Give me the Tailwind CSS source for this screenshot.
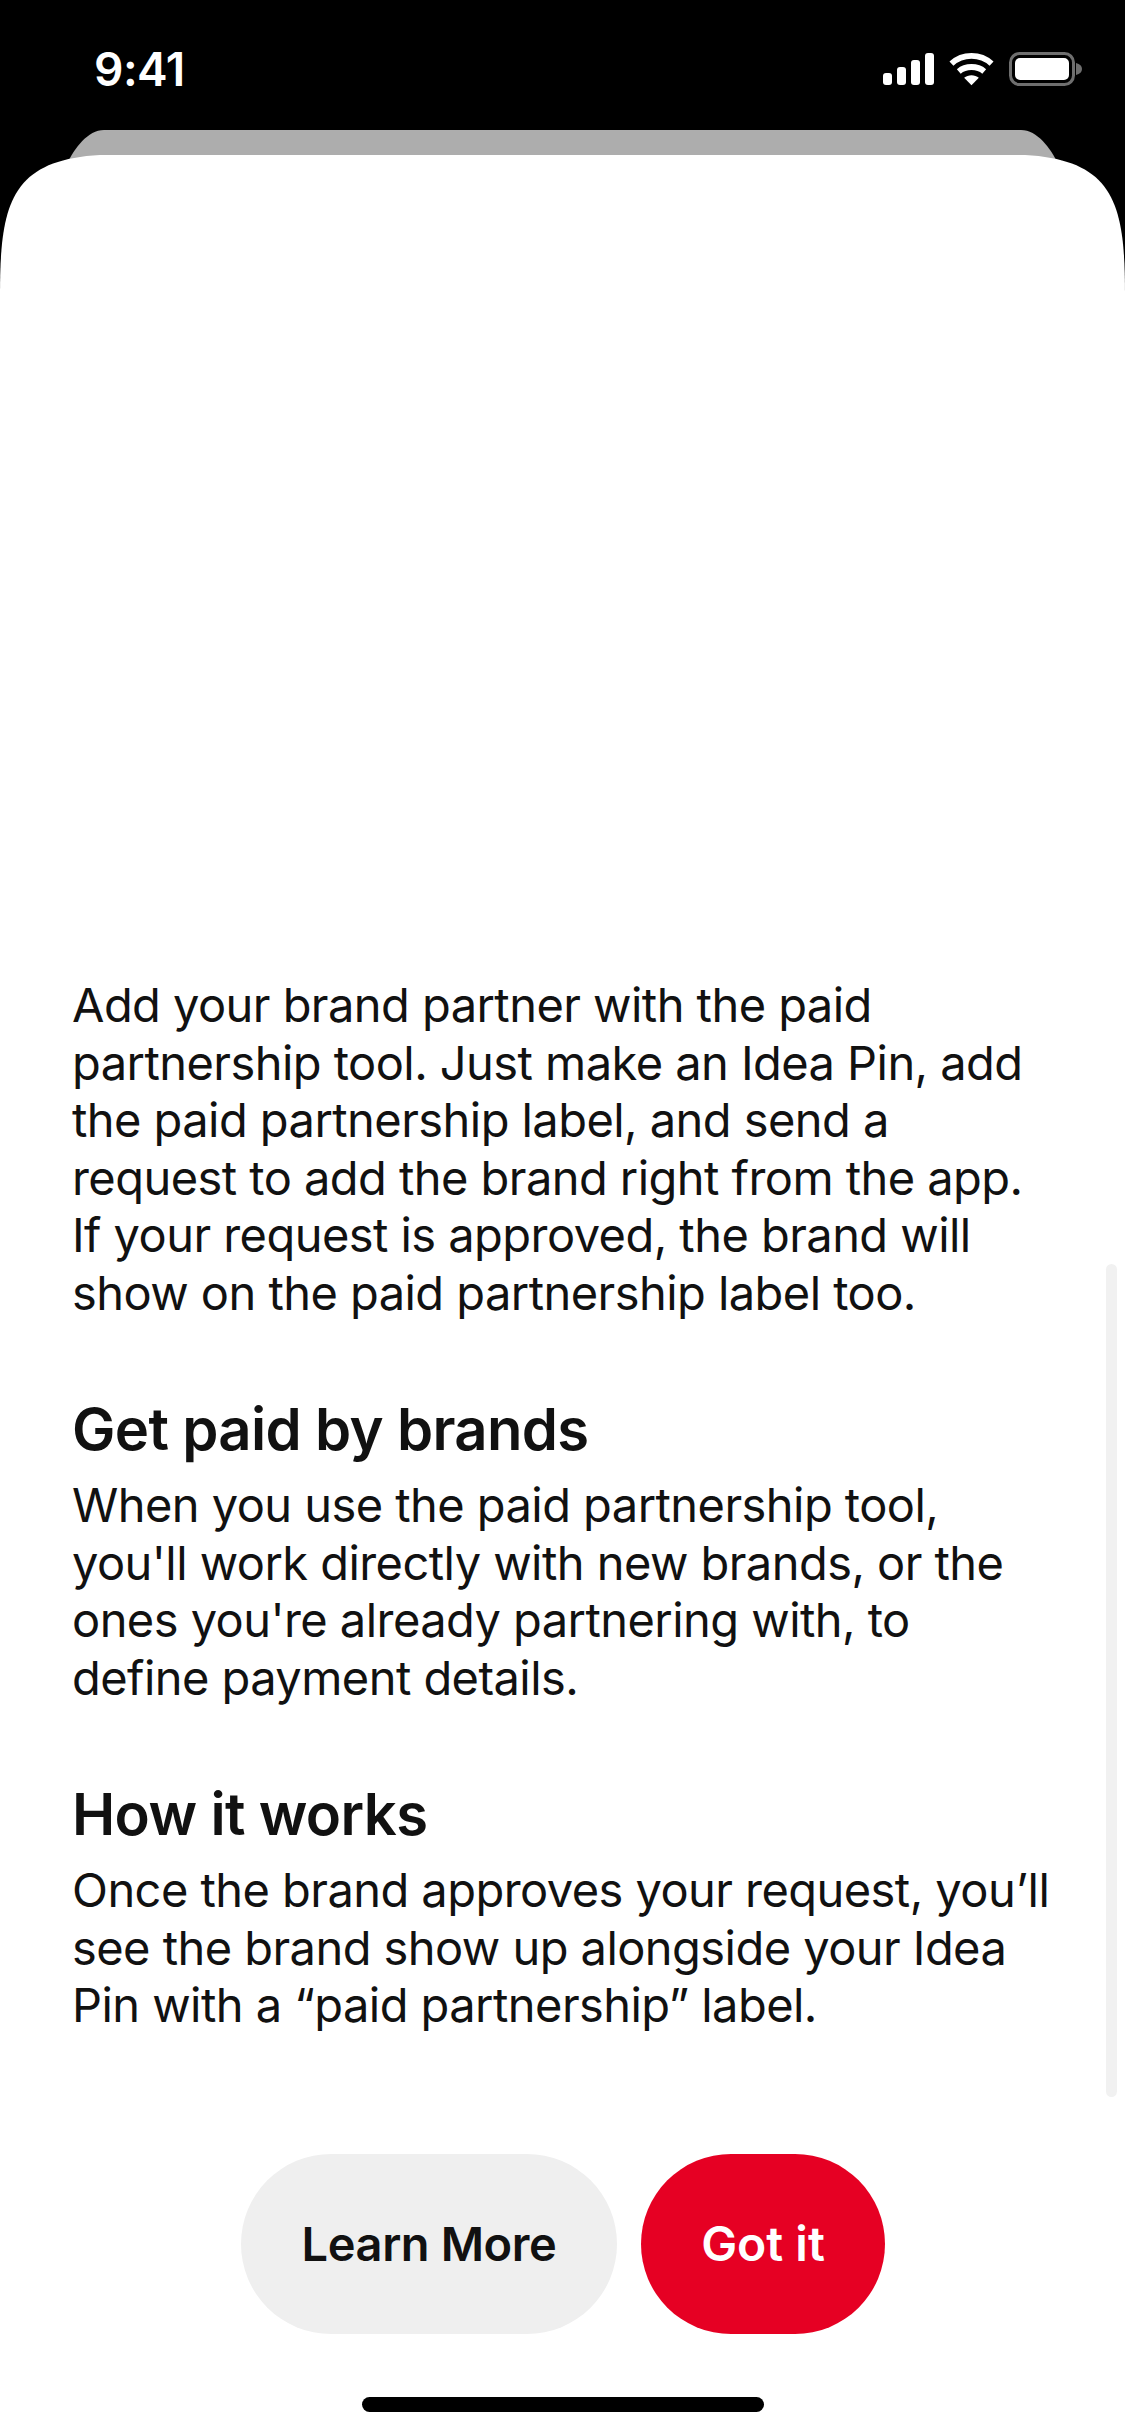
<!DOCTYPE html>
<html lang="en">
<head>
    <meta charset="UTF-8">
    <title>Paid partnership</title>
    <script src="https://cdn.jsdelivr.net/npm/@tailwindcss/browser@4"></script>
</head>
<body class="bg-black font-['Inter',sans-serif] overflow-hidden">
    <div class="w-[1125px] h-[2436px] flex flex-col">
        <!-- Status bar -->
        <div class="h-[130px] pl-[94px] pr-[43px] flex items-start justify-between text-white">
            <span class="mt-[42px] text-[46px] leading-[54px] font-semibold tracking-[-0.5px]">9:41</span>
            <div class="mt-[52px] flex items-end gap-[15px]">
                <svg width="51" height="34" viewBox="0 0 51 34" fill="#fff">
                    <rect x="0" y="21" width="9" height="12" rx="3"/>
                    <rect x="14" y="15" width="9" height="18" rx="3"/>
                    <rect x="28" y="8" width="9" height="25" rx="3"/>
                    <rect x="42" y="1" width="9" height="32" rx="3"/>
                </svg>
                <svg width="45" height="34" viewBox="0 0 46 34" fill="none" stroke="#fff" stroke-width="6">
                    <path d="M2.5 11.5 C14 1 32 1 43.5 11.5"/>
                    <path d="M10 19.5 C17 13.5 29 13.5 36 19.5"/>
                    <path d="M23 33.5 L15.5 26 C19.5 22.5 26.5 22.5 30.5 26 Z" fill="#fff" stroke="none"/>
                </svg>
                <svg width="73" height="34" viewBox="0 0 73 34" fill="none">
                    <rect x="1.5" y="1.5" width="63" height="31" rx="9" stroke="#6f6f6f" stroke-width="3"/>
                    <rect x="6" y="6" width="54" height="22" rx="5" fill="#fff"/>
                    <path d="M67 11 C71 12 73 14 73 17 C73 20 71 22 67 23 Z" fill="#6f6f6f"/>
                </svg>
            </div>
        </div>

        <!-- Card behind the sheet -->
        <div class="mx-[66px] h-[40px] -mb-[15px] shrink-0 bg-[#adadad] [clip-path:path('M0_36_C8_18_22_0_38_0_L955_0_C971_0_985_18_993_36_Z')]"></div>

        <!-- Sheet -->
        <div class="relative flex-1 bg-white flex flex-col [clip-path:path('M0_140_C0_50_10_5_100_0_L1025_0_C1115_5_1125_50_1125_140_L1125_2281_L0_2281_Z')]">
            <div class="absolute right-[8px] top-[1109px] w-[11px] h-[833px] bg-[#f1f1f1] rounded-full"></div>

            <div class="mt-[821px] pl-[72px] pr-[72px] text-[#111111]">
                <p class="text-[47px] leading-[57.5px] tracking-[-0.55px]">Add your brand partner with the paid partnership tool. Just make an Idea Pin, add the paid partnership label, and send a request to add the brand right from the app. If your request is approved, the brand will show on the paid partnership label too.</p>
                <h2 class="mt-[75px] text-[58px] leading-[66px] font-semibold tracking-[-0.65px]">Get paid by brands</h2>
                <p class="mt-[14px] text-[47px] leading-[57.5px] tracking-[-0.55px]">When you use the paid partnership tool, you'll work directly with new brands, or the ones you're already partnering with, to define payment details.</p>
                <h2 class="mt-[75px] text-[58px] leading-[66px] font-semibold tracking-[-0.65px]">How it works</h2>
                <p class="mt-[14px] text-[47px] leading-[57.5px] tracking-[-0.55px]">Once the brand approves your request, you’ll see the brand show up alongside your Idea Pin with a “paid partnership” label.</p>
            </div>

            <div class="absolute left-[241px] top-[1999px] flex gap-[24px]">
                <button class="w-[376px] h-[180px] rounded-[90px] bg-[#efefef] text-[#111111] text-[47px] font-semibold tracking-[-0.4px]">Learn More</button>
                <button class="w-[244px] h-[180px] rounded-[90px] bg-[#e60023] text-white text-[48px] font-semibold">Got it</button>
            </div>
            <div class="absolute left-[362px] top-[2242px] w-[402px] h-[15px] bg-black rounded-full"></div>
        </div>
    </div>
</body>
</html>
